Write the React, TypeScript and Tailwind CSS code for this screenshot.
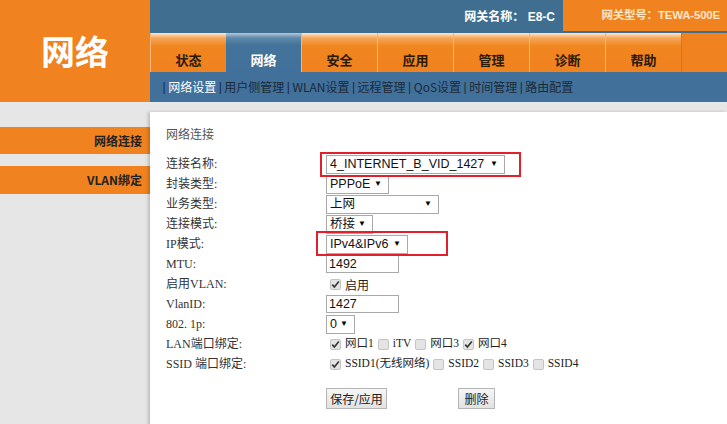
import React from "react";

const cjk = { fontFamily: '"Noto Sans CJK SC", "Noto Sans", sans-serif' };
const lab = { fontFamily: '"Liberation Serif", "Noto Sans CJK SC", serif' };
const ar = { fontFamily: '"Liberation Sans", "Noto Sans CJK SC", sans-serif' };

const tabs = ["状态", "网络", "安全", "应用", "管理", "诊断", "帮助"];
const subs = ["网络设置", "用户侧管理", "WLAN设置", "远程管理", "QoS设置", "时间管理", "路由配置"];

function Arrow() {
  return <span className="text-[8px] leading-none text-black">▼</span>;
}

function Select({ text, w }: { text: string; w: string }) {
  return (
    <div
      className={`flex h-[19px] ${w} items-center justify-between border border-[#a9a9a9] bg-white pl-[3px] pr-[6px] text-[12.5px] text-[#111]`}
      style={ar}
    >
      <span className="leading-none whitespace-nowrap">{text}</span>
      <Arrow />
    </div>
  );
}

function Input({ text }: { text: string }) {
  return (
    <div className="flex h-[18px] w-[73px] items-center border border-[#a9a9a9] bg-white pl-[2px] text-[12.5px] text-[#111]" style={ar}>
      <span className="leading-none">{text}</span>
    </div>
  );
}

function Check({ on }: { on: boolean }) {
  return (
    <span className="inline-flex h-[11px] w-[11px] items-center justify-center rounded-[2px] border border-[#c4c4c4] bg-[#e4e4e4]">
      {on && (
        <svg width="9" height="9" viewBox="0 0 9 9">
          <path d="M1.2 4.6 L3.4 7 L7.8 1.6" fill="none" stroke="#333" strokeWidth="1.6" />
        </svg>
      )}
    </span>
  );
}

function Row({ label, children }: { label: string; children?: React.ReactNode }) {
  return (
    <div className="flex h-[20px] items-center">
      <div className="w-[160px] text-[12px] text-[#333]" style={lab}>{label}</div>
      <div className="flex items-center">{children}</div>
    </div>
  );
}

export default function App() {
  return (
    <div className="relative h-[424px] w-[727px] overflow-hidden bg-[#e6e6e6]" style={cjk}>
      {/* header */}
      <div className="flex h-[102px]">
        <div className="flex w-[150px] items-center justify-center bg-[#f0821f] pb-[2px]">
          <span className="text-[34px] font-bold text-white">网络</span>
        </div>
        <div className="flex flex-1 flex-col">
          <div className="flex h-[33px] bg-[#3f6e90]">
            <div className="flex flex-1 items-center justify-end pr-[8px] text-[12px] font-bold text-white" style={ar}>
              网关名称：&nbsp;E8-C
            </div>
            <div className="flex h-[31px] w-[164px] items-center justify-end bg-[#f0821f] pr-[7px] text-[11.5px] font-bold tracking-[-0.2px] text-[#fde6c6]" style={ar}>
              网关型号：TEWA-500E
            </div>
          </div>
          <div className="flex h-[39px]">
            {tabs.map((t, i) => (
              <div
                key={t}
                className={
                  i === 1
                    ? "flex w-[75px] items-end justify-center bg-[linear-gradient(to_bottom,#b5c9d8_0px,#5f89aa_5px,#44739a_12px,#41709a_100%)] pb-[3px] text-[13px] font-bold text-white"
                    : "flex w-[76px] items-end justify-center border-l border-[#f6b67a] bg-[linear-gradient(to_bottom,#fde7cf_0px,#f6a75a_5px,#f0861f_13px,#f0821f_100%)] pb-[3px] text-[13px] font-bold text-[#2a1a0a]"
                }
              >
                {t}
              </div>
            ))}
            <div className="flex-1 border-l border-[#d97418] bg-[#f0821f]" />
          </div>
          <div className="flex h-[30px] items-center bg-[#41709a] pl-[10px] text-[12px] text-[#1c2a38]">
            {subs.map((s, i) => (
              <React.Fragment key={s}>
                <span className="px-[2.5px] text-[#1c2a38]" style={ar}>|</span>
                <span className={i === 0 ? "text-white" : ""}>{s}</span>
              </React.Fragment>
            ))}
          </div>
        </div>
      </div>
      <div className="h-[2px] bg-[#e4e9ee]" />

      {/* body */}
      <div className="flex">
        <div className="flex w-[150px] flex-col gap-[12px] pt-[23px]">
          <div className="flex h-[27px] items-center justify-end bg-[#f0821f] pr-[8px] text-[12px] font-bold text-[#222]">网络连接</div>
          <div className="flex h-[28px] items-center justify-end bg-[#f0821f] pr-[8px] text-[12px] font-bold text-[#222]">VLAN绑定</div>
        </div>
        <div className="mt-[8px] h-[320px] flex-1 bg-white pl-[16px] pt-[14px] shadow-[-2px_0_3px_rgba(0,0,0,0.18)]">
          <div className="h-[16px] text-[12px] leading-[16px] text-[#555]">网络连接</div>
          <div className="mt-[12px] flex flex-col">
            <Row label="连接名称:">
              <div className="relative">
                <Select text="4_INTERNET_B_VID_1427" w="w-[179px]" />
                <div className="absolute -top-[3px] -bottom-[3px] -left-[6px] -right-[16px] border-2 border-[#e0202a]" />
              </div>
            </Row>
            <Row label="封装类型:">
              <Select text="PPPoE" w="w-[63px]" />
            </Row>
            <Row label="业务类型:">
              <Select text="上网" w="w-[113px]" />
            </Row>
            <Row label="连接模式:">
              <Select text="桥接" w="w-[47px]" />
            </Row>
            <Row label="IP模式:">
              <div className="relative">
                <Select text="IPv4&IPv6" w="w-[82px]" />
                <div className="absolute -top-[4px] -bottom-[2px] -left-[10px] -right-[40px] border-2 border-[#e0202a]" />
              </div>
            </Row>
            <Row label="MTU:">
              <Input text="1492" />
            </Row>
            <Row label="启用VLAN:">
              <div className="flex items-center gap-[4px] pl-[4px] text-[12px] text-[#222]">
                <Check on />
                <span className="mt-[2px]">启用</span>
              </div>
            </Row>
            <Row label="VlanID:">
              <Input text="1427" />
            </Row>
            <Row label="802. 1p:">
              <Select text="0" w="w-[29px]" />
            </Row>
            <Row label="LAN端口绑定:">
              <div className="flex items-center gap-[4px] pl-[4px] text-[11.5px] text-[#222]" style={lab}>
                <Check on />
                <span>网口1</span>
                <Check on={false} />
                <span>iTV</span>
                <Check on={false} />
                <span>网口3</span>
                <Check on />
                <span>网口4</span>
              </div>
            </Row>
            <Row label="SSID 端口绑定:">
              <div className="flex items-center gap-[4px] pl-[4px] text-[11.5px] text-[#222]" style={lab}>
                <Check on />
                <span>SSID1(无线网络)</span>
                <Check on={false} />
                <span>SSID2</span>
                <Check on={false} />
                <span>SSID3</span>
                <Check on={false} />
                <span>SSID4</span>
              </div>
            </Row>
          </div>
          <div className="mt-[14px] flex pl-[160px]">
            <button className="h-[21px] w-[61px] border border-[#b5b5b5] bg-[linear-gradient(to_bottom,#f6f6f6,#e2e2e2)] text-[12px] text-[#222]">
              保存/应用
            </button>
            <button className="ml-[71px] h-[21px] w-[37px] border border-[#b5b5b5] bg-[linear-gradient(to_bottom,#f6f6f6,#e2e2e2)] text-[12px] text-[#222]">
              删除
            </button>
          </div>
        </div>
      </div>
    </div>
  );
}
